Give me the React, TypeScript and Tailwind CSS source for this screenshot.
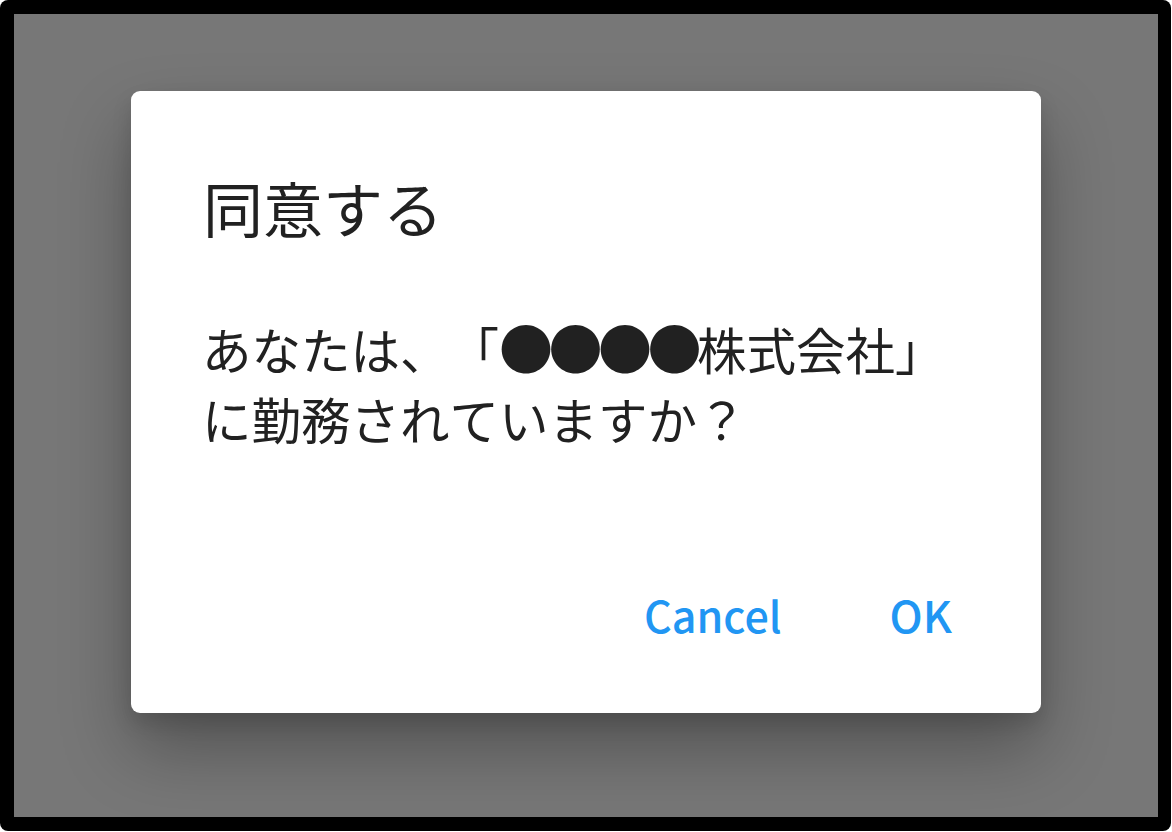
const jp = "font-['Noto_Sans_CJK_JP','Noto_Sans',sans-serif]";

function ConfirmDialog() {
  return (
    <div className="flex h-[622px] w-[910px] flex-col rounded-[9px] bg-white shadow-[0_36px_70px_rgba(0,0,0,0.3),0_10px_20px_rgba(0,0,0,0.12)]">
      <h2 className="pl-[72px] pt-[80px] text-[60px] leading-[72px] text-[#212121]">同意する</h2>
      <p className="pl-[71px] pt-[69px] text-[49.5px] leading-[70px] text-[#212121] [text-spacing-trim:space-all] [font-kerning:none]">
        あなたは、「<span className="text-[54px] tracking-[-4.5px]">●●●●</span>株式会社」
        <br />
        に勤務されていますか？
      </p>
      <div className="mt-auto flex justify-end pb-[75px] pr-[89px]">
        <button className="text-[43px] font-medium leading-[48px] text-[#2196f3]">Cancel</button>
        <button className="ml-[108px] text-[44px] font-medium leading-[48px] text-[#2196f3]">OK</button>
      </div>
    </div>
  );
}

export default function App() {
  return (
    <div className={`h-[832px] w-[1172px] bg-white ${jp}`}>
      <div className="h-[831px] w-[1171px] rounded-[8px] bg-black pb-[14px] pl-[14px] pr-[13px] pt-[14px]">
        <div className="flex h-full w-full justify-center bg-[#777777] pt-[77px]">
          <ConfirmDialog />
        </div>
      </div>
    </div>
  );
}
